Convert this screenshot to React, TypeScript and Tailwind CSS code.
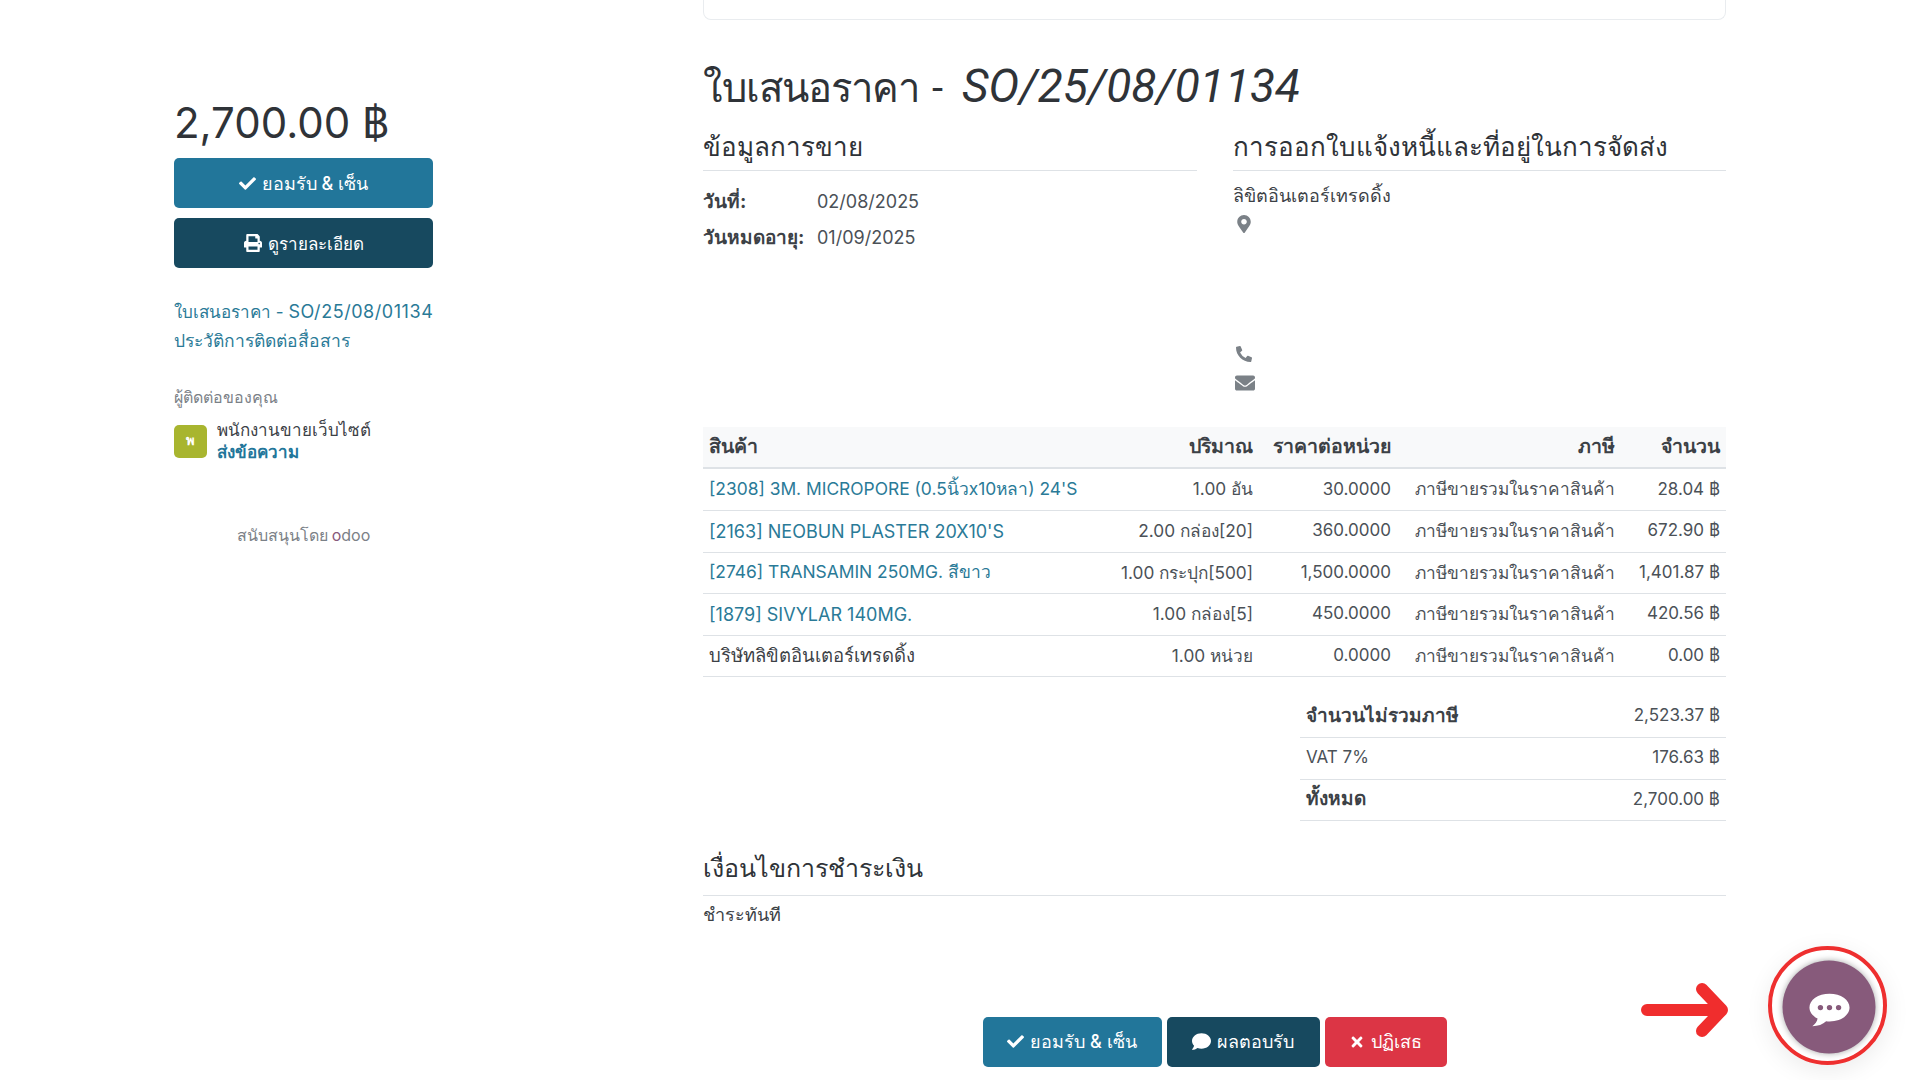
import { FaCheck, FaComment, FaEnvelope, FaMapMarkerAlt, FaPhoneAlt, FaPrint, FaTimes } from "react-icons/fa";

const rows = [
  { name: "[2308] 3M. MICROPORE (0.5นิ้วx10หลา) 24'S", qty: "1.00", unit: "อัน", price: "30.0000", total: "28.04", h: "h-[42px]", cls: "text-[17.4px] text-[#2a7a97]" },
  { name: "[2163] NEOBUN PLASTER 20X10'S", qty: "2.00", unit: "กล่อง[20]", price: "360.0000", total: "672.90", h: "h-[42px]", cls: "text-[18px] text-[#2a7a97]" },
  { name: "[2746] TRANSAMIN 250MG. สีขาว", qty: "1.00", unit: "กระปุก[500]", price: "1,500.0000", total: "1,401.87", h: "h-[41px]", cls: "text-[17.4px] text-[#2a7a97]" },
  { name: "[1879] SIVYLAR 140MG.", qty: "1.00", unit: "กล่อง[5]", price: "450.0000", total: "420.56", h: "h-[42px]", cls: "text-[18px] text-[#2a7a97]" },
  { name: "บริษัทลิขิตอินเตอร์เทรดดิ้ง", qty: "1.00", unit: "หน่วย", price: "0.0000", total: "0.00", h: "h-[41px]", cls: "text-[18.5px] text-[#3c4146]" },
];

const font = "font-['Inter','Noto_Sans',sans-serif]";

function Btn({ color, className = "", children }: { color: string; className?: string; children: React.ReactNode }) {
  return (
    <div className={`flex h-[50px] items-center justify-center gap-1.5 rounded-[5px] text-[18px] font-medium text-white ${color} ${className}`}>
      {children}
    </div>
  );
}

function Heading({ className = "text-[26px] leading-[46px]", children }: { className?: string; children: React.ReactNode }) {
  return <h3 className={`h-[47px] border-b border-[#dee2e6] text-[#2f3338] ${className}`}>{children}</h3>;
}

export default function App() {
  return (
    <div className={`relative flex h-[1080px] overflow-hidden bg-white pl-[174px] text-[17px] text-[#4b5157] ${font}`}>
      {/* แถบด้านซ้าย */}
      <aside className="w-[259px] shrink-0 pt-[95px]">
        <div className="text-[42px] leading-[56px] text-[#2f3338]">2,700.00 ฿</div>
        <div className="mt-[7px] flex flex-col gap-[10px]">
          <Btn color="bg-[#22769a]"><FaCheck size={17} />ยอมรับ &amp; เซ็น</Btn>
          <Btn color="bg-[#17495f]"><FaPrint size={18} /><span className="text-[17px] leading-[28px] pt-[2px]">ดูรายละเอียด</span></Btn>
        </div>
        <div className="mt-[33px] flex flex-col gap-[7px] leading-[22px] text-[#2a7a97]">
          <div className="whitespace-nowrap">ใบเสนอราคา - <span className="text-[18px] tracking-[0.55px]">SO/25/08/01134</span></div>
          <div className="text-[17.5px] font-medium">ประวัติการติดต่อสื่อสาร</div>
        </div>
        <div className="mt-[34px] text-[16px] leading-[22px] text-[#7b8187]">ผู้ติดต่อของคุณ</div>
        <div className="mt-[11px] flex items-center gap-[10px]">
          <div className="flex h-[33px] w-[33px] items-center justify-center rounded-[5px] bg-[#a8b52f] text-[13px] font-bold text-white">พ</div>
          <div className="leading-[23px]">
            <div className="text-[#3c4146]">พนักงานขายเว็บไซต์</div>
            <div className="text-[17px] font-bold leading-[21px] text-[#22769a]">ส่งข้อความ</div>
          </div>
        </div>
        <div className="mt-[60px] flex items-center justify-center gap-1 text-[16px] text-[#7b8187]">
          สนับสนุนโดย
          <span className="text-[16px]"><span className="text-[#875a7b]">o</span>doo</span>
        </div>
      </aside>

      {/* เนื้อหาหลัก */}
      <main className="ml-[270px] w-[1023px] shrink-0">
        <div className="h-[20px] rounded-b-[8px] border border-t-0 border-[#e9ecef]" />
        <h2 className="mt-[38px] h-[56px] whitespace-nowrap leading-[56px] text-[#2f3338] font-['Roboto','Inter',sans-serif]">
          <span className="text-[40px] tracking-[-1px]">ใบเสนอราคา</span>
          <span className="ml-[13px] mr-[19px] text-[40px]">-</span>
          <em className="text-[46px]">SO/25/08/01134</em>
        </h2>
        <div className="mt-[10px] flex gap-[36px]">
          <div className="w-[494px]">
            <Heading>ข้อมูลการขาย</Heading>
            <div className="mt-[18px] grid grid-cols-[114px_1fr] gap-y-[11px] text-[18px] leading-[25px]">
              <b className="whitespace-nowrap text-[19px] font-bold text-[#3c4146]">วันที่:</b><span>02/08/2025</span>
              <b className="whitespace-nowrap text-[19px] font-bold text-[#3c4146]">วันหมดอายุ:</b><span>01/09/2025</span>
            </div>
          </div>
          <div className="w-[493px]">
            <Heading>การออกใบแจ้งหนี้และที่อยู่ในการจัดส่ง</Heading>
            <div className="mt-[12px] text-[18px] leading-[25px] text-[#3c4146]">ลิขิตอินเตอร์เทรดดิ้ง</div>
            <FaMapMarkerAlt className="ml-[2px] mt-[7px] text-[#7b8187]" size={18} />
            <FaPhoneAlt className="ml-[3px] mt-[113px] text-[#7b8187]" size={16} />
            <FaEnvelope className="ml-[2px] mt-[11px] text-[#7b8187]" size={20} />
          </div>
        </div>

        <table className="mt-[34px] w-full table-fixed border-collapse">
          <colgroup>
            <col className="w-[400px]" />
            <col className="w-[156px]" />
            <col className="w-[138px]" />
            <col className="w-[224px]" />
            <col className="w-[105px]" />
          </colgroup>
          <thead>
            <tr className="h-[41px] border-b-2 border-[#dee2e6] bg-[#f8f9fa] text-[19.5px] font-bold text-[#3c4146]">
              <th className="px-[6px] text-left">สินค้า</th>
              <th className="px-[6px] text-right">ปริมาณ</th>
              <th className="whitespace-nowrap px-[6px] text-right">ราคาต่อหน่วย</th>
              <th className="px-[6px] text-right">ภาษี</th>
              <th className="px-[6px] text-right">จำนวน</th>
            </tr>
          </thead>
          <tbody>
            {rows.map((r) => (
              <tr key={r.name} className={`${r.h} border-b border-[#dee2e6]`}>
                <td className={`whitespace-nowrap px-[6px] ${r.cls}`}>{r.name}</td>
                <td className="whitespace-nowrap px-[6px] text-right text-[17.25px]">{r.qty} {r.unit}</td>
                <td className="px-[6px] text-right">{r.price}</td>
                <td className="whitespace-nowrap px-[6px] text-right text-[17.25px]">ภาษีขายรวมในราคาสินค้า</td>
                <td className="whitespace-nowrap px-[6px] text-right">{r.total} ฿</td>
              </tr>
            ))}
          </tbody>
        </table>

        <div className="ml-auto mt-[19px] w-[426px]">
          <div className="flex h-[42px] items-center justify-between border-b border-[#dee2e6] px-[6px]"><b className="text-[19px] font-bold text-[#3c4146]">จำนวนไม่รวมภาษี</b><span>2,523.37 ฿</span></div>
          <div className="flex h-[42px] items-center justify-between border-b border-[#dee2e6] px-[6px]"><span>VAT 7%</span><span>176.63 ฿</span></div>
          <div className="flex h-[41px] items-center justify-between border-b border-[#dee2e6] px-[6px]"><b className="text-[19px] font-bold text-[#3c4146]">ทั้งหมด</b><span>2,700.00 ฿</span></div>
        </div>

        <div className="mt-[28px]">
          <Heading className="text-[25px] leading-[38px]">เงื่อนไขการชำระเงิน</Heading>
          <div className="mt-[6px] text-[18px] leading-[25px] text-[#3c4146]">ชำระทันที</div>
        </div>

        <div className="mt-[90px] flex justify-center gap-[5px]">
          <Btn color="bg-[#22769a]" className="w-[179px]"><FaCheck size={17} />ยอมรับ &amp; เซ็น</Btn>
          <Btn color="bg-[#17495f]" className="w-[153px]"><FaComment size={19} />ผลตอบรับ</Btn>
          <Btn color="bg-[#dc3545]" className="w-[122px]"><FaTimes size={16} />ปฏิเสธ</Btn>
        </div>
      </main>

      {/* ลูกศรและปุ่มแชต */}
      <svg className="absolute left-[1641px] top-[982px]" width="88" height="56" viewBox="0 0 88 56">
        <path d="M6 28H80M61 7L81 28L61 49" fill="none" stroke="#f02d2d" strokeWidth="12" strokeLinecap="round" strokeLinejoin="round" />
      </svg>
      <div className="absolute left-[1768px] top-[946px] flex h-[119px] w-[119px] items-center justify-center rounded-full border-[4px] border-[#ee2f2f] shadow-[0_6px_24px_rgba(0,0,0,0.08)]">
        <div className="flex h-[93px] w-[93px] translate-x-[1.5px] translate-y-[1.5px] items-center justify-center rounded-full bg-[#875a7b] shadow-[0_0_6px_rgba(0,0,0,0.35)]">
          <svg className="mt-[5px]" width="42" height="35" viewBox="0 0 44 36">
            <path d="M22 1C10 1 1 7.500 1 15.500C1 20.500 4.500 24.500 9.500 27C9 30 7 33 4 35C10 35 15 33 18.500 29.800C19.700 30 20.800 30 22 30C34 30 43 23.500 43 15.500C43 7.500 34 1 22 1Z" fill="white" />
            <circle cx="12.500" cy="15.500" r="2.800" fill="#875a7b" />
            <circle cx="22" cy="15.500" r="2.800" fill="#875a7b" />
            <circle cx="31.500" cy="15.500" r="2.800" fill="#875a7b" />
          </svg>
        </div>
      </div>
    </div>
  );
}
